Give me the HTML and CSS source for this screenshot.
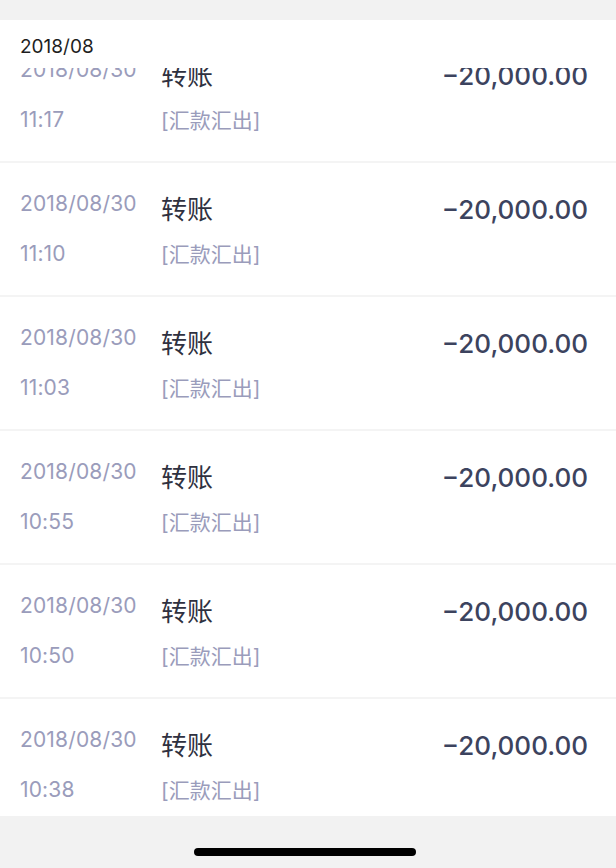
FILE: index.html
```html
<!DOCTYPE html>
<html lang="zh-CN">
<head>
    <meta charset="UTF-8">
    <meta name="viewport" content="width=device-width, initial-scale=1.0">
    <title>交易明细</title>
    <link rel="stylesheet" href="styles.css">
</head>
<body>
    <div class="top-band"></div>

    <!-- Transaction list -->
    <div class="list">
        <div class="month-header">2018/08</div>

        <div class="row">
            <div class="col-time">
                <div class="date">2018/08/30</div>
                <div class="time">11:17</div>
            </div>
            <div class="col-info">
                <div class="title">转账</div>
                <div class="type">[汇款汇出]</div>
            </div>
            <div class="amount">−20,000.00</div>
        </div>

        <div class="row">
            <div class="col-time">
                <div class="date">2018/08/30</div>
                <div class="time">11:10</div>
            </div>
            <div class="col-info">
                <div class="title">转账</div>
                <div class="type">[汇款汇出]</div>
            </div>
            <div class="amount">−20,000.00</div>
        </div>

        <div class="row">
            <div class="col-time">
                <div class="date">2018/08/30</div>
                <div class="time">11:03</div>
            </div>
            <div class="col-info">
                <div class="title">转账</div>
                <div class="type">[汇款汇出]</div>
            </div>
            <div class="amount">−20,000.00</div>
        </div>

        <div class="row">
            <div class="col-time">
                <div class="date">2018/08/30</div>
                <div class="time">10:55</div>
            </div>
            <div class="col-info">
                <div class="title">转账</div>
                <div class="type">[汇款汇出]</div>
            </div>
            <div class="amount">−20,000.00</div>
        </div>

        <div class="row">
            <div class="col-time">
                <div class="date">2018/08/30</div>
                <div class="time">10:50</div>
            </div>
            <div class="col-info">
                <div class="title">转账</div>
                <div class="type">[汇款汇出]</div>
            </div>
            <div class="amount">−20,000.00</div>
        </div>

        <div class="row">
            <div class="col-time">
                <div class="date">2018/08/30</div>
                <div class="time">10:38</div>
            </div>
            <div class="col-info">
                <div class="title">转账</div>
                <div class="type">[汇款汇出]</div>
            </div>
            <div class="amount">−20,000.00</div>
        </div>
    </div>

    <!-- Home indicator -->
    <div class="home-bar">
        <div class="home-indicator"></div>
    </div>
</body>
</html>
```

FILE: styles.css
```css
html, body {
    height: 100%;
}

body {
    margin: 0;
    padding: 0;
    background-color: #f2f2f2;
    font-family: Inter, "Noto Sans CJK SC", sans-serif;
    display: flex;
    flex-direction: column;
    overflow: hidden;
}

.top-band {
    height: 20px;
    flex-shrink: 0;
}

/* List */
.list {
    position: relative;
    flex: 1;
    overflow: hidden;
    background: #fff;
    padding-top: 9px;
}

.month-header {
    position: absolute;
    top: 0;
    left: 0;
    right: 0;
    height: 48px;
    box-sizing: border-box;
    padding: 6px 20px 0;
    line-height: 42px;
    font-size: 19px;
    color: #1e1e1e;
    background: #fff;
    z-index: 1;
}

.row {
    display: flex;
    align-items: flex-start;
    height: 132px;
    box-sizing: border-box;
    padding: 17px 28px 0 20px;
}

    .row + .row {
        border-top: 2px solid #f4f4f4;
        height: 134px;
    }

.col-time {
    width: 141px;
    color: #9a9cbb;
    font-size: 21px;
    letter-spacing: 0.15px;
}

    .col-time .date {
        line-height: 48px;
    }

    .col-time .time {
        line-height: 52px;
    }

.col-info {
    flex: 1;
}

    .col-info .title {
        font-size: 26px;
        line-height: 60px;
        color: #2f3140;
    }

    .col-info .type {
        font-size: 21px;
        line-height: 30px;
        color: #9a9cbb;
    }

.amount {
    font-size: 26px;
    font-weight: 500;
    line-height: 60px;
    color: #3c435e;
}

/* Bottom home bar */
.home-bar {
    height: 52px;
    flex-shrink: 0;
    background: #f2f2f2;
    box-sizing: border-box;
    padding: 32px 0 0 194px;
}

.home-indicator {
    width: 222px;
    height: 8px;
    border-radius: 4px;
    background: #000;
}
```
